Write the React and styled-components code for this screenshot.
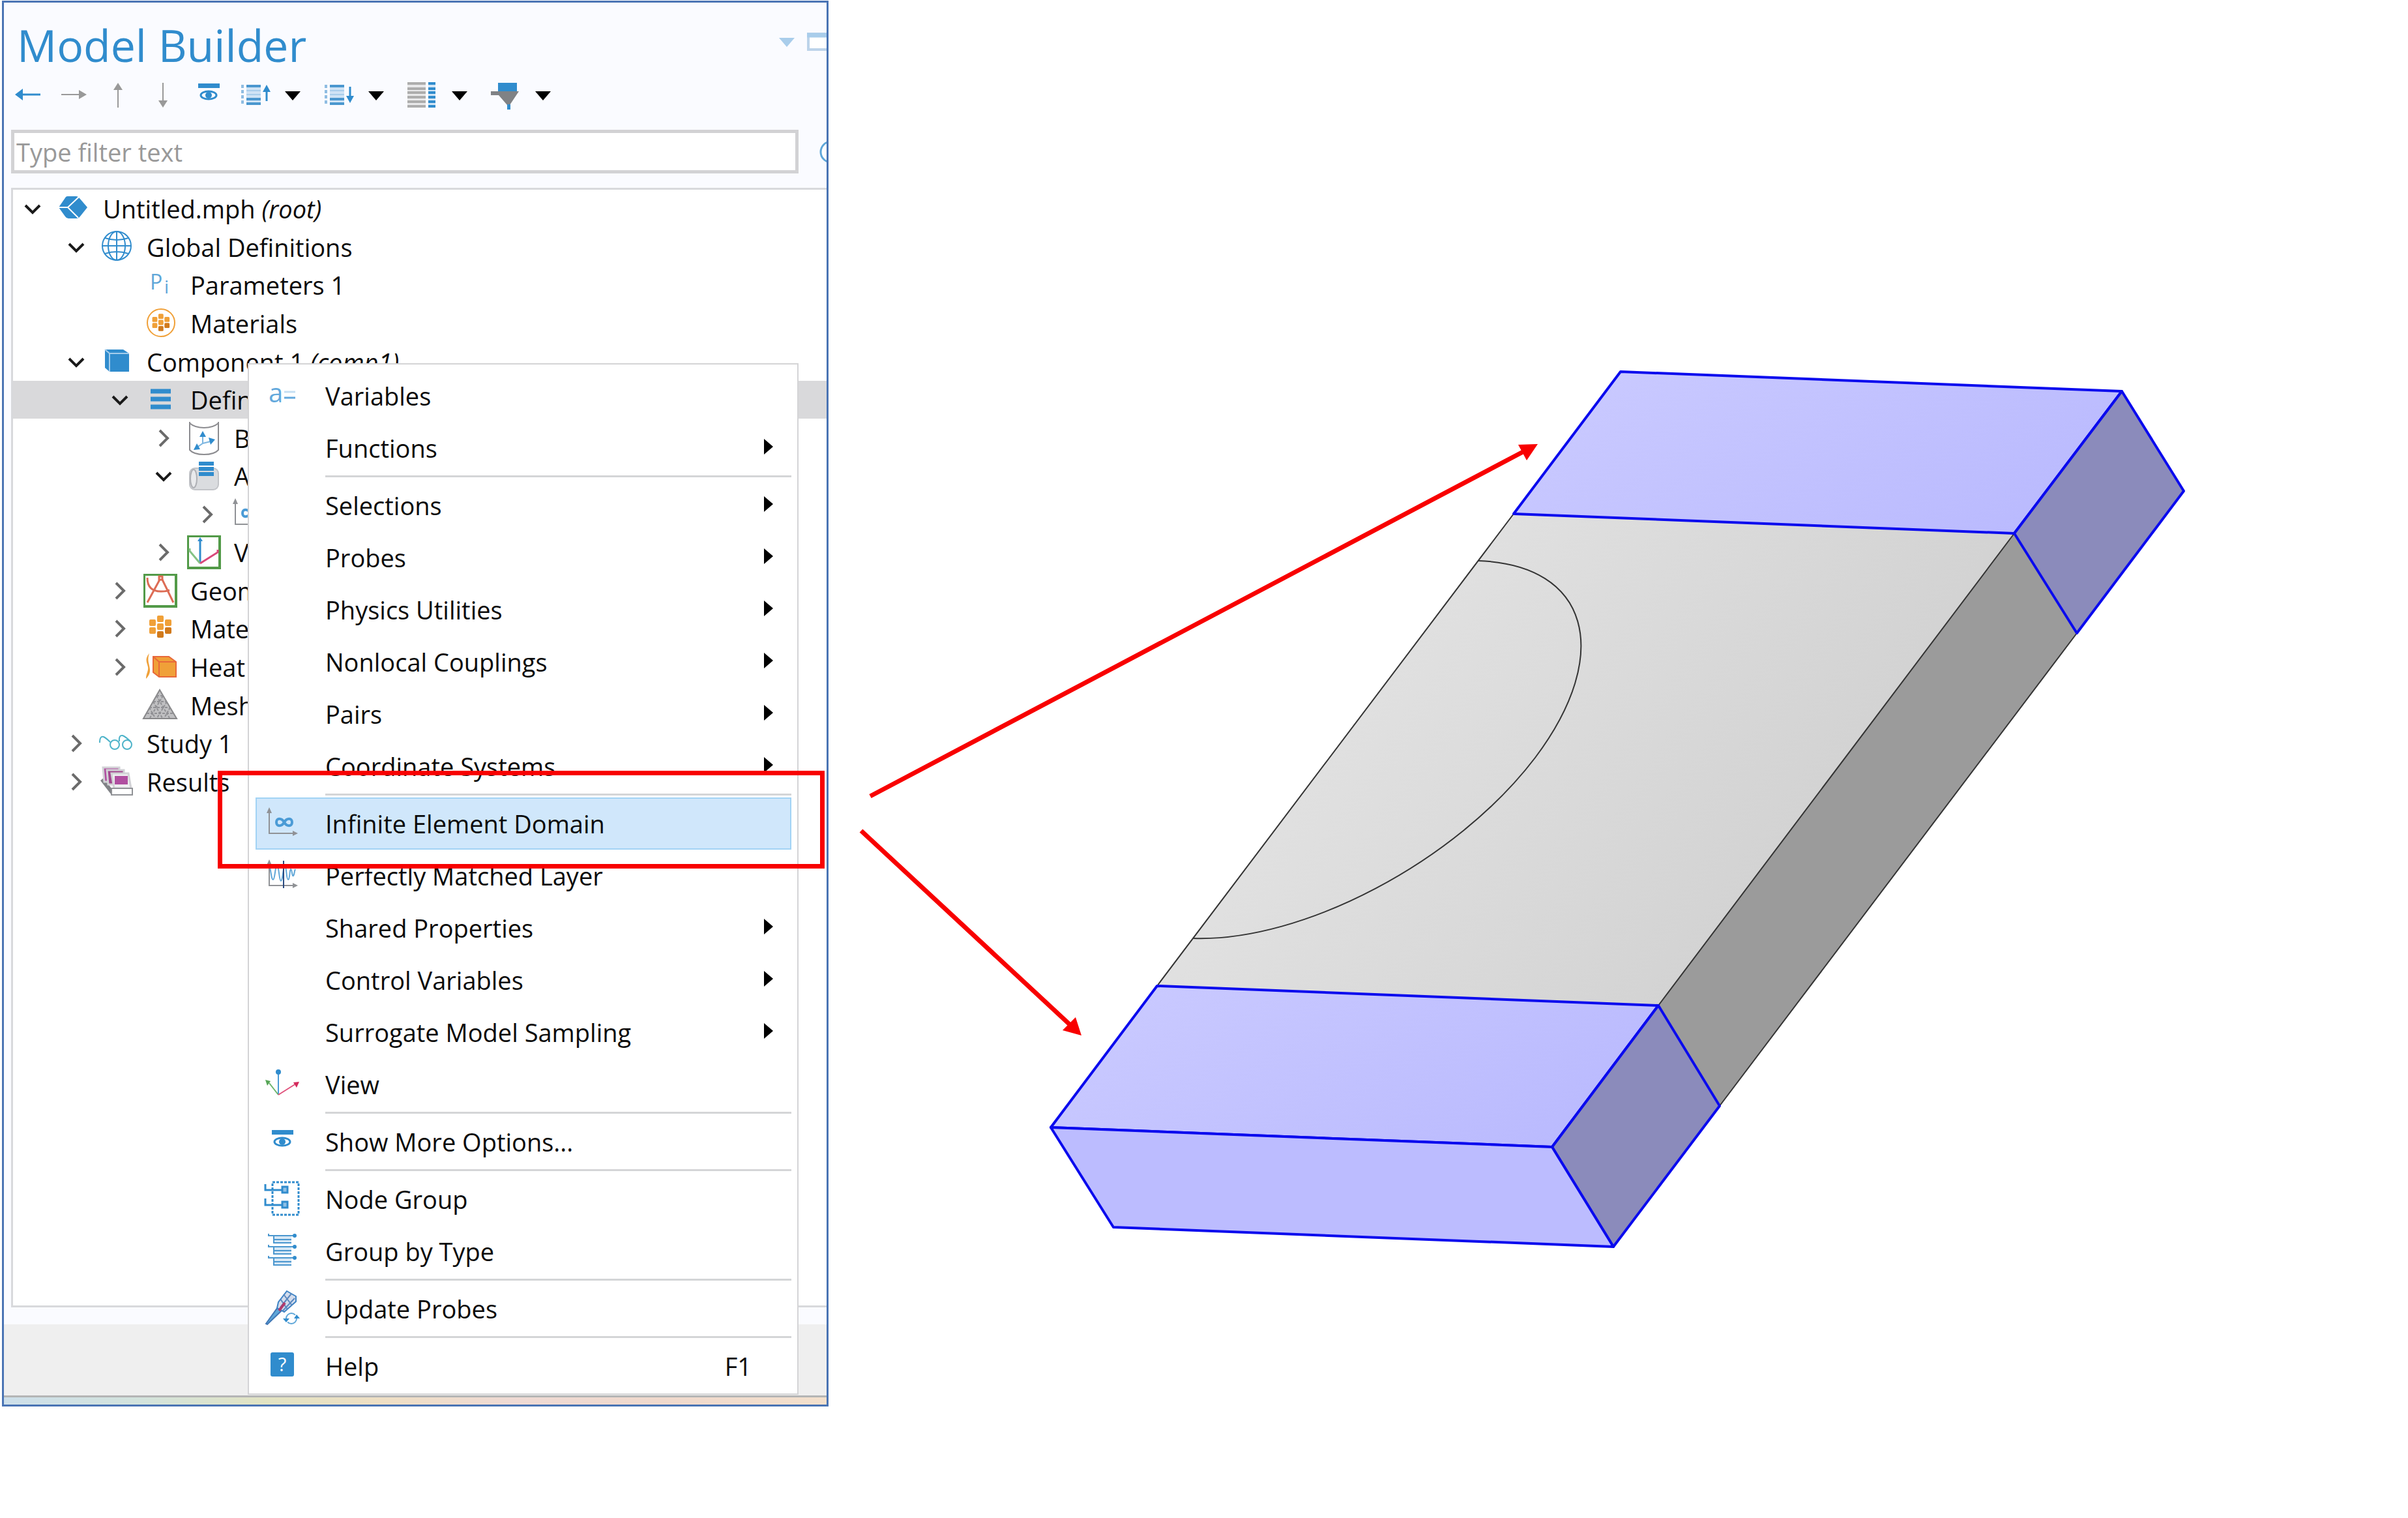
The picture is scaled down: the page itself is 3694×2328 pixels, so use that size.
import React, { useState } from "react";
import styled, { createGlobalStyle } from "styled-components";

const GlobalStyle = createGlobalStyle`
  body {
    margin: 0;
    background: #fff;
    color: #0a0a0a;
    font-family: "Open Sans", "Noto Sans", sans-serif;
    font-size: 38px;
  }

  * {
    box-sizing: border-box;
  }
`;

const BLUE = "#308ccd";
const ORANGE = "#f0a038";

const Page = styled.main`
  display: flex;
  align-items: flex-start;
  min-height: 100vh;
`;

const Panel = styled.section`
  position: relative;
  flex: 0 0 1268px;
  margin: 1px 0 0 3px;
  border: 3px solid #4a74b4;
  background: #fafbff;
  overflow: hidden;
`;

const TitleBar = styled.header`
  display: flex;
  justify-content: space-between;
  height: 108px;
  padding-left: 20px;
`;

const Title = styled.h1`
  margin: 0;
  color: ${BLUE};
  font-size: 68px;
  font-weight: 400;
  line-height: 130px;
`;

const WindowButtons = styled.div`
  display: flex;
  flex-shrink: 0;
  width: 81px;
  padding-top: 46px;
`;

const IconButton = styled.button`
  display: flex;
  align-items: center;
  justify-content: center;
  flex-shrink: 0;
  width: ${(props) => props.$width}px;
  height: ${(props) => props.$height || 68}px;
  padding: 0;
  border: none;
  background: none;
  cursor: pointer;
`;

const Toolbar = styled.div`
  display: flex;
  padding-left: 2px;
`;

const FilterRow = styled.div`
  display: flex;
  align-items: center;
  gap: 32px;
  margin: 19px 0 22px 11px;
`;

const FilterInput = styled.input`
  flex: 0 0 1208px;
  height: 67px;
  padding: 0 3px;
  border: 5px solid #d2d2d4;
  background: #fff;
  font: inherit;

  &::placeholder {
    color: #999;
    opacity: 1;
  }
`;

const Tree = styled.ul`
  display: grid;
  grid-template-rows: repeat(16, 1fr);
  height: 937px;
  margin: 0;
  padding: 0;
  list-style: none;
`;

const TreeBox = styled.div`
  min-height: 1717px;
  margin: 0 0 26px 11px;
  border: 3px solid #d8d9dc;
  border-right: none;
  background: #fff;
`;

const TreeRow = styled.li`
  display: flex;
  align-items: center;
  padding-left: ${(props) => props.$level * 67}px;
  background: ${(props) => (props.$selected ? "#d9d9db" : "transparent")};
  white-space: nowrap;
`;

const TreeIcon = styled.span`
  display: flex;
  justify-content: center;
  flex: 0 0 70px;
  margin-right: 11px;
`;

const StatusArea = styled.div`
  height: 109px;
  background: #efefef;
`;

const DesktopStrip = styled.div`
  height: 14px;
  border-top: 3px solid #b4b5b5;
  background: linear-gradient(
    90deg,
    #cddfea,
    #d3e3dc 17%,
    #e2e3c2 32%,
    #efdfc4 46%,
    #efdad4 62%,
    #f0d9cc 80%,
    #f3e0cc
  );
`;

const Menu = styled.div`
  position: absolute;
  top: 553px;
  left: 374px;
  width: 845px;
  padding: 8px 9px 2px 10px;
  border: 2px solid #d4d4d6;
  background: #fff;
`;

const MenuItem = styled.button`
  display: flex;
  align-items: center;
  width: 100%;
  height: 80px;
  padding: 0 26px 0 10px;
  border: 2px solid ${(props) => (props.$active ? "#a2d3f5" : "transparent")};
  background: ${(props) => (props.$active ? "#d0e7fb" : "none")};
  color: inherit;
  font: inherit;
  text-align: left;
  white-space: nowrap;
`;

const MenuIcon = styled.span`
  flex: 0 0 56px;
  height: 56px;
  margin-right: 39px;
`;

const MenuLabel = styled.span`
  flex: 1;
`;

const Shortcut = styled.span`
  margin-right: 33px;
`;

const Separator = styled.hr`
  height: 8px;
  margin: 0 0 0 107px;
  border: none;
  background: linear-gradient(#d4d5d7, #d4d5d7) 0 2px / 100% 3px no-repeat;
`;

const Highlight = styled.div`
  position: absolute;
  top: 1178px;
  left: 328px;
  width: 931px;
  height: 150px;
  border: 7px solid #f80000;
  pointer-events: none;
`;

const Viewport = styled.section`
  flex: 1;
  min-width: 0;
`;

const Drawing = styled.svg`
  display: block;
  width: 100%;
`;

const Glyph = styled.svg`
  display: block;
  flex-shrink: 0;
  width: 56px;
  height: 56px;
  overflow: visible;
`;

function Icon({ children, ...rest }) {
  return (
    <Glyph viewBox="0 0 56 56" fill="none" aria-hidden="true" {...rest}>
      {children}
    </Glyph>
  );
}

/* Toolbar icons */

const BackIcon = () => (
  <Icon>
    <path d="M18 27H47" stroke={BLUE} strokeWidth="3" />
    <path d="M8 27L20 18V36Z" fill={BLUE} />
  </Icon>
);

const ForwardIcon = () => (
  <Icon>
    <path d="M10 27H40" stroke="#999" strokeWidth="2" />
    <path d="M49 27L37 20V34Z" fill="#999" />
  </Icon>
);

const UpIcon = () => (
  <Icon>
    <path d="M28 18V47" stroke="#999" strokeWidth="2" />
    <path d="M28 9L35 20H21Z" fill="#999" />
  </Icon>
);

const DownIcon = () => (
  <Icon>
    <path d="M28 9V38" stroke="#999" strokeWidth="2" />
    <path d="M28 47L35 36H21Z" fill="#999" />
  </Icon>
);

const EyeIcon = () => (
  <Icon>
    <rect x="13" y="10" width="33" height="7" fill={BLUE} />
    <ellipse cx="29" cy="28" rx="12" ry="6" stroke={BLUE} strokeWidth="3" />
    <circle cx="29" cy="28" r="5" fill={BLUE} />
  </Icon>
);

function ListIcon({ down }) {
  return (
    <Icon>
      <path d="M12 12V42" stroke="#8fbde2" strokeWidth="4" strokeDasharray="5 3" />
      <rect x="18" y="12" width="22" height="30" fill="#cfe3f5" />
      <path d="M18 14H40M18 34H40M18 41H40" stroke="#4b97cf" strokeWidth="4" />
      <path d="M18 21H40M18 27H40" stroke="#a9cdeb" strokeWidth="2" />
      {down ? (
        <>
          <path d="M49 15V32" stroke={BLUE} strokeWidth="3" />
          <path d="M49 40L55 29H43Z" fill={BLUE} />
        </>
      ) : (
        <>
          <path d="M49 20V37" stroke={BLUE} strokeWidth="3" />
          <path d="M49 12L55 23H43Z" fill={BLUE} />
        </>
      )}
    </Icon>
  );
}

const ColumnsIcon = () => (
  <Icon>
    <rect x="9" y="8" width="28" height="39" fill="#e9e9ea" />
    <rect x="41" y="8" width="11" height="39" fill="#d3e6f6" />
    {[10, 18, 24, 31, 38, 45].map((y) => (
      <path key={y} d={`M9 ${y}H37`} stroke="#adadad" strokeWidth="4" />
    ))}
    {[10, 18, 24, 31, 38, 45].map((y) => (
      <path key={y} d={`M41 ${y}H52`} stroke={BLUE} strokeWidth="4" />
    ))}
  </Icon>
);

const FilterIcon = () => (
  <Icon>
    <rect x="20" y="9" width="29" height="14" fill={BLUE} />
    <path d="M9 22H52L38 43H34L21 28H9Z" fill="#808285" />
    <rect x="34" y="42" width="5" height="8" fill={BLUE} />
  </Icon>
);

const Caret = ({ color = "#000" }) => (
  <Icon>
    <path d="M13 22H37L25 36Z" fill={color} />
  </Icon>
);

const WindowIcon = () => (
  <Icon>
    <rect x="12" y="16" width="36" height="24" fill="#fff" stroke="#bcd3ea" strokeWidth="4" />
    <path d="M10 18H50" stroke="#a9cdeb" strokeWidth="7" />
  </Icon>
);

const SearchIcon = () => (
  <Icon>
    <circle cx="18" cy="28" r="16" fill="#fff" stroke="#5ea6d8" strokeWidth="3" />
  </Icon>
);

/* Tree and menu icons */

const RootIcon = () => (
  <Icon>
    <path d="M6 26L17 10Q18 9 20 9H33Q36 9 38 12L50 26L38 41Q36 43 34 43H21Q18 43 16 40Z" fill={BLUE} />
    <path d="M6 26H20M37 10L20 26L36 42" stroke="#fff" strokeWidth="2" />
  </Icon>
);

const GlobeIcon = () => (
  <Icon stroke={BLUE} strokeWidth="2">
    <circle cx="28" cy="26" r="22" />
    <ellipse cx="28" cy="26" rx="13" ry="22" />
    <path d="M28 4V48M6 26H50M10 14Q28 20 46 14M10 38Q28 32 46 38" />
  </Icon>
);

const ParametersIcon = () => (
  <Icon>
    <text x="12" y="35" fontSize="32" fill="#5ea6d8">P</text>
    <text x="34" y="41" fontSize="28" fill="#5ea6d8">i</text>
  </Icon>
);

function Cubes() {
  const cubes = [
    [23, 8], [23, 20], [23, 32, 1],
    [11, 14], [11, 26],
    [35, 14], [35, 26, 1],
  ];
  return cubes.map(([x, y, dark]) => (
    <rect
      key={`${x}-${y}`}
      x={x}
      y={y}
      width="10"
      height="10"
      rx="2"
      fill={dark ? "#d17a1c" : ORANGE}
    />
  ));
}

const MaterialsIcon = () => (
  <Icon>
    <Cubes />
  </Icon>
);

const GlobalMaterialsIcon = () => (
  <Icon>
    <circle cx="29" cy="27" r="21" stroke={ORANGE} strokeWidth="2" />
    <g transform="translate(7 7) scale(0.78)">
      <Cubes />
    </g>
  </Icon>
);

const ComponentIcon = () => (
  <Icon>
    <path d="M10 9H38L47 15V43H17L10 37Z" fill={BLUE} />
    <path d="M10 9L17 15H47M17 15V43" stroke="#a5cdec" strokeWidth="2" />
  </Icon>
);

const DefinitionsIcon = () => (
  <Icon>
    <path d="M13 15H44M13 27H44M13 39H44" stroke={BLUE} strokeWidth="7" />
  </Icon>
);

const BoundaryIcon = () => (
  <Icon>
    <path d="M6 3V46Q12 53 28 53T50 46V3M6 5Q14 12 28 12T50 5" stroke="#8c8c90" strokeWidth="2" />
    <path d="M13 45L26 36L42 32M26 36V22" stroke="#7db6e0" strokeWidth="2" />
    <path d="M26 17L31 26H21ZM45 30L35 27L38 38ZM12 46L17 36L22 45Z" fill={BLUE} />
  </Icon>
);

const ArtificialIcon = () => (
  <Icon>
    <rect x="6" y="16" width="44" height="33" rx="8" fill="#dadcdf" stroke="#c2c4c8" strokeWidth="2" />
    <ellipse cx="12" cy="32" rx="5" ry="14" fill="#e9eaec" stroke="#aeb0b5" strokeWidth="2" />
    <path d="M20 9H43M20 17H43M20 25H43" stroke={BLUE} strokeWidth="6" />
  </Icon>
);

const Axes = () => (
  <>
    <path d="M9 10V43H46" stroke="#909296" strokeWidth="2" />
    <path d="M9 3L13 12H5ZM53 43L45 39V47Z" fill="#909296" />
  </>
);

const InfiniteIcon = () => (
  <Icon>
    <Axes />
    <path
      d="M32 26C28 19 20 19 20 26S28 33 32 26S44 19 44 26S36 33 32 26Z"
      stroke="#4b9bd6"
      strokeWidth="4"
    />
  </Icon>
);

const LayerIcon = () => (
  <Icon>
    <Axes />
    <path
      d="M9 12C12 20 12 34 15 34S18 12 21 12S24 36 27 36S30 14 33 14S35 34 38 34S40 18 42 18S44 30 46 28S47 22 49 18"
      stroke="#5ea6d8"
      strokeWidth="2"
    />
    <path d="M31 5V47" stroke="#2a4a80" strokeWidth="2" />
  </Icon>
);

const ViewIcon = () => (
  <Icon>
    <path d="M23 11V43" stroke="#4b9bd6" strokeWidth="2" />
    <path d="M23 44L9 26" stroke="#6ab46a" strokeWidth="2" />
    <path d="M23 44L50 27" stroke="#e0527c" strokeWidth="2" />
    <circle cx="23" cy="9" r="4" fill={BLUE} />
    <path d="M3 21L11 23L6 30Z" fill="#56a556" />
    <path d="M55 24L51 33L46 25Z" fill="#d42a5c" />
  </Icon>
);

const GreenFrame = () => (
  <path d="M2 2H54V54H2ZM5 5V50H50V5Z" fill="#529a48" fillRule="evenodd" />
);

const FramedViewIcon = () => (
  <Icon>
    <GreenFrame />
    <path d="M22 10V45" stroke={BLUE} strokeWidth="3" />
    <path d="M22 5L26 11H18Z" fill={BLUE} />
    <path d="M22 45L6 26V22" stroke="#84c284" strokeWidth="3" />
    <path d="M22 45L49 28V24" stroke="#d8487a" strokeWidth="3" />
  </Icon>
);

const GeometryIcon = () => (
  <Icon>
    <GreenFrame />
    <g stroke="#dd6c55" strokeWidth="3">
      <path d="M27 11L8 46M31 11L48 46M8 8Q8 29 29 29Q37 29 42 27" />
      <rect x="26" y="6" width="5" height="5" />
    </g>
  </Icon>
);

const HeatIcon = () => (
  <Icon>
    <path d="M11 7C3 16 8 22 9 28S6 38 6 46C14 38 12 31 11 26S8 16 11 7Z" fill={ORANGE} />
    <path d="M17 12H41L52 20V43H26L17 36Z" fill={ORANGE} stroke="#e8683a" strokeWidth="2" />
    <path d="M17 12L26 20H52M26 20V43" stroke="#e8683a" strokeWidth="2" />
  </Icon>
);

const MeshIcon = () => (
  <Icon>
    <path d="M27 4L53 48H2Z" fill="#c0c0c2" stroke="#88888a" strokeWidth="2" />
    <path
      d="M22 13H33M17 22H38M11 31H43M7 40H48M32 13L12 47M38 22L23 47M43 31L34 47M22 13L42 47M17 22L31 47M11 31L20 47"
      stroke="#909094"
      strokeWidth="2"
      strokeDasharray="4 2"
    />
  </Icon>
);

const StudyIcon = () => (
  <Icon stroke="#4db3c9" strokeWidth="2">
    <circle cx="25" cy="30" r="7" />
    <circle cx="44" cy="30" r="7" />
    <path d="M2 27Q2 16 8 18Q12 20 18 26M32 25Q31 15 37 16Q42 18 49 25" />
  </Icon>
);

const ResultsIcon = () => (
  <Icon>
    <path d="M3 26L20 48H52V38H20L8 22Z" fill="#808286" />
    <g stroke="#d2d2d6" strokeWidth="3">
      <path d="M7 6H32V28H9Z" fill="#b04fa0" />
      <path d="M13 10H39V32H15Z" fill="#a2478f" />
      <path d="M20 15H46L50 38H24Z" fill="#eeeef0" />
    </g>
    <rect x="25" y="19" width="20" height="13" fill="#b04fa0" />
    <rect x="20" y="38" width="32" height="10" fill="#fff" stroke="#909296" strokeWidth="2" />
  </Icon>
);

const VariablesIcon = () => (
  <Icon>
    <text x="8" y="38" fontSize="40" fill="#62a8dc">a</text>
    <path d="M32 22H49" stroke="#c5dff3" strokeWidth="3" />
    <path d="M32 31H49" stroke="#62a8dc" strokeWidth="3" />
  </Icon>
);

const NodeGroupIcon = () => (
  <Icon stroke={BLUE} strokeWidth="3">
    <rect x="14" y="2" width="40" height="50" strokeDasharray="4 2" />
    <path d="M3 5V14H28M3 27V37H28" />
    <rect x="29" y="9" width="8" height="9" fill="#8fc0e6" />
    <rect x="29" y="32" width="8" height="9" fill="#8fc0e6" />
  </Icon>
);

const GroupByTypeIcon = () => (
  <Icon>
    {[4, 21, 38].map((y) => (
      <g key={y}>
        <rect x="17" y={y + 1} width="26" height="10" fill="#d7e8f6" />
        <path d={`M8 ${y - 3}V${y}H46M16 ${y}V${y + 11}H43M16 ${y + 6}H43`} stroke="#4b97cf" strokeWidth="2" />
        <circle cx="48" cy={y} r="3" fill={BLUE} />
      </g>
    ))}
  </Icon>
);

const ProbeIcon = () => (
  <Icon>
    <path d="M4 51L22 26L28 31L6 52Z" fill="#5ea6d8" stroke="#4177b5" strokeWidth="2" />
    <path d="M36 1L50 9V17L32 33L21 27L23 18Z" fill="#d3dcec" stroke="#3e83c4" strokeWidth="2" />
    <path d="M31 6L44 23M26 13L37 29M43 5L26 26M48 12L30 31" stroke="#5a88bf" strokeWidth="2" />
    <path d="M33 19L24 31" stroke="#b03a6c" strokeWidth="4" />
    <circle cx="43" cy="43" r="8" stroke="#5ea6d8" strokeWidth="2" strokeDasharray="19 6" />
    <path d="M30 43H40L35 49ZM47 43H56L51 37Z" fill={BLUE} />
  </Icon>
);

const HelpIcon = () => (
  <Icon>
    <rect x="11" y="7" width="36" height="37" rx="3" fill={BLUE} />
    <text x="29" y="36" fontSize="29" textAnchor="middle" fill="#fff">?</text>
  </Icon>
);

const ExpandIcon = ({ open }) => (
  <Icon strokeWidth="4">
    {open ? (
      <path d="M18 23L29 34L40 23" stroke="#1a1a1a" />
    ) : (
      <path d="M23 16L35 28L23 40" stroke="#6b6b6b" />
    )}
  </Icon>
);

const treeNodes = [
  { level: 0, icon: RootIcon, label: "Untitled.mph", tag: "(root)", open: true },
  { level: 1, icon: GlobeIcon, label: "Global Definitions", open: true },
  { level: 2, icon: ParametersIcon, label: "Parameters 1" },
  { level: 2, icon: GlobalMaterialsIcon, label: "Materials" },
  { level: 1, icon: ComponentIcon, label: "Component 1", tag: "(comp1)", open: true },
  { level: 2, icon: DefinitionsIcon, label: "Definitions", open: true, selected: true },
  { level: 3, icon: BoundaryIcon, label: "Boundary", open: false },
  { level: 3, icon: ArtificialIcon, label: "Artificial", open: true },
  { level: 4, icon: InfiniteIcon, open: false },
  { level: 3, icon: FramedViewIcon, label: "View 1", open: false },
  { level: 2, icon: GeometryIcon, label: "Geometry 1", open: false },
  { level: 2, icon: MaterialsIcon, label: "Materials", open: false },
  { level: 2, icon: HeatIcon, label: "Heat", open: false },
  { level: 2, icon: MeshIcon, label: "Mesh 1" },
  { level: 1, icon: StudyIcon, label: "Study 1", open: false },
  { level: 1, icon: ResultsIcon, label: "Results", open: false },
];

const menuGroups = [
  [
    { label: "Variables", icon: VariablesIcon },
    { label: "Functions", submenu: true },
  ],
  [
    { label: "Selections", submenu: true },
    { label: "Probes", submenu: true },
    { label: "Physics Utilities", submenu: true },
    { label: "Nonlocal Couplings", submenu: true },
    { label: "Pairs", submenu: true },
    { label: "Coordinate Systems", submenu: true },
  ],
  [
    { label: "Infinite Element Domain", icon: InfiniteIcon, active: true },
    { label: "Perfectly Matched Layer", icon: LayerIcon },
    { label: "Shared Properties", submenu: true },
    { label: "Control Variables", submenu: true },
    { label: "Surrogate Model Sampling", submenu: true },
    { label: "View", icon: ViewIcon },
  ],
  [{ label: "Show More Options...", icon: EyeIcon }],
  [
    { label: "Node Group", icon: NodeGroupIcon },
    { label: "Group by Type", icon: GroupByTypeIcon },
  ],
  [{ label: "Update Probes", icon: ProbeIcon }],
  [{ label: "Help", icon: HelpIcon, shortcut: "F1" }],
];

const SubmenuArrow = styled.svg`
  width: 14px;
  height: 24px;
  margin-bottom: 4px;
`;

function ContextMenu() {
  return (
    <Menu role="menu">
      {menuGroups.map((group, index) => (
        <React.Fragment key={index}>
          {index > 0 && <Separator />}
          {group.map((item) => (
            <MenuItem key={item.label} type="button" role="menuitem" $active={item.active}>
              <MenuIcon>{item.icon && <item.icon />}</MenuIcon>
              <MenuLabel>{item.label}</MenuLabel>
              {item.shortcut && <Shortcut>{item.shortcut}</Shortcut>}
              {item.submenu && (
                <SubmenuArrow viewBox="0 0 14 24" aria-hidden="true">
                  <path d="M0 0L14 12L0 24Z" />
                </SubmenuArrow>
              )}
            </MenuItem>
          ))}
        </React.Fragment>
      ))}
    </Menu>
  );
}

function ModelTree() {
  return (
    <TreeBox>
      <Tree>
        {treeNodes.map((node, index) => (
          <TreeRow key={index} $level={node.level} $selected={node.selected}>
            <IconButton $width={57} $height={56} type="button" aria-label="Toggle" disabled={node.open === undefined}>
              {node.open !== undefined && <ExpandIcon open={node.open} />}
            </IconButton>
            <TreeIcon>
              <node.icon />
            </TreeIcon>
            <span>
              {node.label} {node.tag && <em>{node.tag}</em>}
            </span>
          </TreeRow>
        ))}
      </Tree>
    </TreeBox>
  );
}

function ModelView() {
  return (
    <Drawing viewBox="1271 0 2423 2328" fill="none" role="img" aria-label="Geometry with infinite element domains">
      <defs>
        <linearGradient id="domain" x1="0" y1="0.2" x2="1" y2="0.6">
          <stop offset="0" stopColor="#cacaff" />
          <stop offset="1" stopColor="#babafe" />
        </linearGradient>
        <linearGradient id="plate" x1="0" y1="0.3" x2="1" y2="0.7">
          <stop offset="0.2" stopColor="#e1e1e1" />
          <stop offset="0.8" stopColor="#d2d2d2" />
        </linearGradient>
      </defs>

      {/* middle section */}
      <path d="M2322 788L3090 818L2544 1542L1775 1512Z" fill="url(#plate)" />
      <path d="M3090 818L3186 971L2638 1696L2544 1542Z" fill="#9b9b9b" />
      <g stroke="#333" strokeWidth="2">
        <path d="M2322 788L1775 1512M3090 818L2544 1542M3186 971L2638 1696" />
        <path d="M2268 860C2437 866 2476 1001 2355 1162C2234 1321 1999 1445 1830 1439" />
      </g>

      {/* upper and lower domains */}
      <g stroke="#0a0aee" strokeWidth="4" strokeLinejoin="round">
        <path d="M2486 570L3255 600L3090 818L2322 788Z" fill="url(#domain)" />
        <path d="M3255 600L3350 753L3186 971L3090 818Z" fill="#8b8bbb" />
        <path d="M1775 1512L2544 1542L2381 1759L1612 1729Z" fill="url(#domain)" />
        <path d="M2544 1542L2638 1696L2475 1912L2381 1759Z" fill="#8b8bbb" />
        <path d="M1612 1729L2381 1759L2475 1912L1708 1882Z" fill="#bcbcff" />
      </g>

      {/* callout arrows */}
      <g stroke="#f80000" strokeWidth="7">
        <path d="M1335 1221L2340 691M1321 1274L1643 1573" />
      </g>
      <path d="M2359 681L2329 682L2342 706ZM1659 1588L1650 1560L1630 1580Z" fill="#f80000" />
    </Drawing>
  );
}

function App() {
  const [filter, setFilter] = useState("");

  return (
    <Page>
      <GlobalStyle />
      <Panel>
        <TitleBar>
          <Title>Model Builder</Title>
          <WindowButtons>
            <IconButton $width={45} $height={28} type="button" aria-label="Panel menu">
              <Caret color="#a9cdeb" />
            </IconButton>
            <IconButton $width={48} $height={28} type="button" aria-label="Maximize">
              <WindowIcon />
            </IconButton>
          </WindowButtons>
        </TitleBar>

        <Toolbar>
          <IconButton $width={69} type="button" aria-label="Back"><BackIcon /></IconButton>
          <IconButton $width={69} type="button" aria-label="Forward"><ForwardIcon /></IconButton>
          <IconButton $width={69} type="button" aria-label="Move up"><UpIcon /></IconButton>
          <IconButton $width={69} type="button" aria-label="Move down"><DownIcon /></IconButton>
          <IconButton $width={69} type="button" aria-label="Show"><EyeIcon /></IconButton>
          <IconButton $width={69} type="button" aria-label="Collapse"><ListIcon /></IconButton>
          <IconButton $width={59} type="button" aria-label="Collapse options"><Caret /></IconButton>
          <IconButton $width={69} type="button" aria-label="Expand"><ListIcon down /></IconButton>
          <IconButton $width={59} type="button" aria-label="Expand options"><Caret /></IconButton>
          <IconButton $width={69} type="button" aria-label="Columns"><ColumnsIcon /></IconButton>
          <IconButton $width={59} type="button" aria-label="Column options"><Caret /></IconButton>
          <IconButton $width={69} type="button" aria-label="Filter"><FilterIcon /></IconButton>
          <IconButton $width={59} type="button" aria-label="Filter options"><Caret /></IconButton>
        </Toolbar>

        <FilterRow>
          <FilterInput
            type="text"
            aria-label="Filter"
            placeholder="Type filter text"
            value={filter}
            onChange={(e) => setFilter(e.target.value)}
          />
          <SearchIcon />
        </FilterRow>

        <ModelTree />
        <StatusArea />
        <DesktopStrip />

        <ContextMenu />
        <Highlight />
      </Panel>

      <Viewport>
        <ModelView />
      </Viewport>
    </Page>
  );
}

export default App;
